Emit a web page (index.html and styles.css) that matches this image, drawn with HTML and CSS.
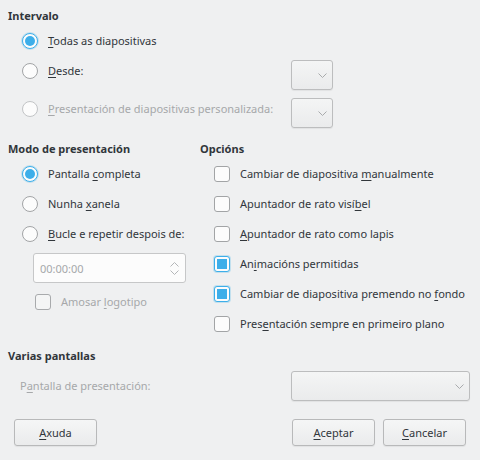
FILE: index.html
```html
<!DOCTYPE html>
<html lang="gl">
<head>
<meta charset="utf-8">
<link rel="stylesheet" href="styles.css">
</head>
<body>
<div class="dialog">
  <div class="heading">Intervalo</div>
  <div class="interval">
    <div class="opt row">
      <span class="radio checked"></span>
      <span class="label"><u>T</u>odas as diapositivas</span>
    </div>
    <div class="range-row r2">
      <div class="opt choice">
        <span class="radio"></span>
        <span class="label"><u>D</u>esde:</span>
      </div>
      <div class="combo small">
        <svg class="chev" width="9" height="5" viewBox="0 0 9 5"><path d="M0.5 0.5 L4.5 4.5 L8.5 0.5" fill="none" stroke="#a9abad" stroke-width="1"/></svg>
      </div>
    </div>
    <div class="range-row">
      <div class="opt choice">
        <span class="radio disabled"></span>
        <span class="label dis"><u>P</u>resentación de diapositivas personalizada:</span>
      </div>
      <div class="combo small">
        <svg class="chev" width="9" height="5" viewBox="0 0 9 5"><path d="M0.5 0.5 L4.5 4.5 L8.5 0.5" fill="none" stroke="#a9abad" stroke-width="1"/></svg>
      </div>
    </div>
  </div>

  <div class="middle">
    <div class="col left">
      <div class="heading">Modo de presentación</div>
      <div class="rows">
        <div class="opt row"><span class="radio checked"></span><span class="label">Pantalla <u>c</u>ompleta</span></div>
        <div class="opt row"><span class="radio"></span><span class="label">Nunha <u>x</u>anela</span></div>
        <div class="opt row"><span class="radio"></span><span class="label"><u>B</u>ucle e repetir despois de:</span></div>
        <div class="spin">
          <span class="spin-text">00:00:00</span>
          <svg class="spin-arrows" width="9" height="13" viewBox="0 0 9 13"><path d="M0.5 4.5 L4.5 0.5 L8.5 4.5 M0.5 8.5 L4.5 12.5 L8.5 8.5" fill="none" stroke="#b4b6b8" stroke-width="1"/></svg>
        </div>
        <div class="opt row logo"><span class="check disabled"></span><span class="label dis">Amosar <u>l</u>ogotipo</span></div>
      </div>
    </div>
    <div class="col right">
      <div class="heading">Opcións</div>
      <div class="rows">
        <div class="opt row"><span class="check"></span><span class="label">Cambiar de diapositiva <u>m</u>anualmente</span></div>
        <div class="opt row"><span class="check"></span><span class="label">Apuntador de rato visí<u>b</u>el</span></div>
        <div class="opt row"><span class="check"></span><span class="label"><u>A</u>puntador de rato como lapis</span></div>
        <div class="opt row"><span class="check checked"></span><span class="label">An<u>i</u>macións permitidas</span></div>
        <div class="opt row"><span class="check checked"></span><span class="label">Cambiar de diapositiva premendo no <u>f</u>ondo</span></div>
        <div class="opt row"><span class="check"></span><span class="label">Pres<u>e</u>ntación sempre en primeiro plano</span></div>
      </div>
    </div>
  </div>

  <div class="heading multi">Varias pantallas</div>
  <div class="screen-row">
    <span class="label dis">P<u>a</u>ntalla de presentación:</span>
    <div class="combo wide">
      <svg class="chev" width="9" height="5" viewBox="0 0 9 5"><path d="M0.5 0.5 L4.5 4.5 L8.5 0.5" fill="none" stroke="#a9abad" stroke-width="1"/></svg>
    </div>
  </div>

  <div class="buttons">
    <button class="btn"><u>A</u>xuda</button>
    <div class="spacer"></div>
    <button class="btn"><u>A</u>ceptar</button>
    <button class="btn"><u>C</u>ancelar</button>
  </div>
</div>
</body>
</html>
```

FILE: styles.css
```css
* { box-sizing: border-box; }
html, body { margin: 0; padding: 0; }
body {
  background: #eff0f1;
  font-family: "Noto Sans", "DejaVu Sans", sans-serif;
  font-size: 11px;
  color: #31363b;
  width: 480px;
  height: 460px;
  overflow: hidden;
}
.dialog {
  padding: 8px 10px 0 8px;
}
.heading {
  font-weight: bold;
  height: 16px;
  line-height: 16px;
}
u { text-decoration: underline; text-underline-offset: 2px; }

.interval { margin-top: 2px; }
.opt {
  display: flex;
  align-items: center;
  height: 30px;
  padding-left: 14px;
}
.label { white-space: nowrap; line-height: 16px; }
.dis { color: #a6a8aa; }

.range-row {
  display: flex;
  align-items: flex-start;
  height: 34px;
}
.range-row.r2 { height: 38px; }
.choice { width: 283px; }

.radio {
  width: 16px;
  height: 16px;
  border-radius: 50%;
  border: 1px solid #a2a4a6;
  background: #fcfcfc;
  margin-right: 10px;
  flex: none;
  position: relative;
}
.radio.disabled { border-color: #c2c4c6; }
.radio.checked {
  border-color: #3daee9;
  box-shadow: 0 0 0 1px rgba(61,174,233,0.25);
}
.radio.checked::after {
  content: "";
  position: absolute;
  left: 2px; top: 2px;
  width: 10px; height: 10px;
  border-radius: 50%;
  background: #3daee9;
}

.check {
  width: 16px;
  height: 16px;
  border-radius: 3px;
  border: 1px solid #a2a4a6;
  background: #fcfcfc;
  margin-right: 10px;
  flex: none;
  position: relative;
}
.check.disabled { border-color: #a8aaac; background: #f4f5f5; }
.check.checked {
  border-color: #3daee9;
  box-shadow: 0 0 0 1px rgba(61,174,233,0.25);
}
.check.checked::after {
  content: "";
  position: absolute;
  left: 2px; top: 2px;
  width: 10px; height: 10px;
  background: #3daee9;
}

.combo {
  margin-top: 4px;
  height: 30px;
  border: 1px solid #bcbdbe;
  border-radius: 3px;
  background: linear-gradient(#f4f5f5, #eaebec);
  display: flex;
  align-items: center;
  justify-content: flex-end;
  padding-right: 5px;
  flex: none;
  box-shadow: 0 1px 1px rgba(0,0,0,0.06);
}
.combo.small { width: 42px; }
.combo.wide { width: 179px; margin-top: 0; }
.chev { display: block; }

.middle {
  display: grid;
  grid-template-columns: 192px 1fr;
  margin-top: 13px;
}
.rows { margin-top: 2px; }

.spin {
  margin: 4px 0 0 25px;
  width: 153px;
  height: 30px;
  border: 1px solid #c6c7c8;
  border-radius: 3px;
  background: #fcfcfc;
  display: flex;
  align-items: center;
  justify-content: space-between;
  padding: 0 6px 0 6px;
}
.spin-text { color: #a6a8aa; }
.spin-arrows { display: block; }
.opt.logo { padding-left: 27px; margin-top: 4px; }

.heading.multi { margin-top: 9px; }
.screen-row {
  display: flex;
  align-items: center;
  justify-content: space-between;
  padding-left: 12px;
  margin-top: 7px;
}

.buttons {
  display: flex;
  gap: 8px;
  margin-top: 18px;
  padding-left: 6px;
  margin-right: 4px;
}
.spacer { flex: 1; }
.btn {
  width: 83px;
  height: 27px;
  border: 1px solid #b8b9ba;
  border-radius: 3px;
  background: linear-gradient(#f5f6f6, #eaebec);
  font-family: inherit;
  font-size: 11px;
  color: #31363b;
  padding: 0;
  box-shadow: 0 1px 1px rgba(0,0,0,0.06);
}
```
